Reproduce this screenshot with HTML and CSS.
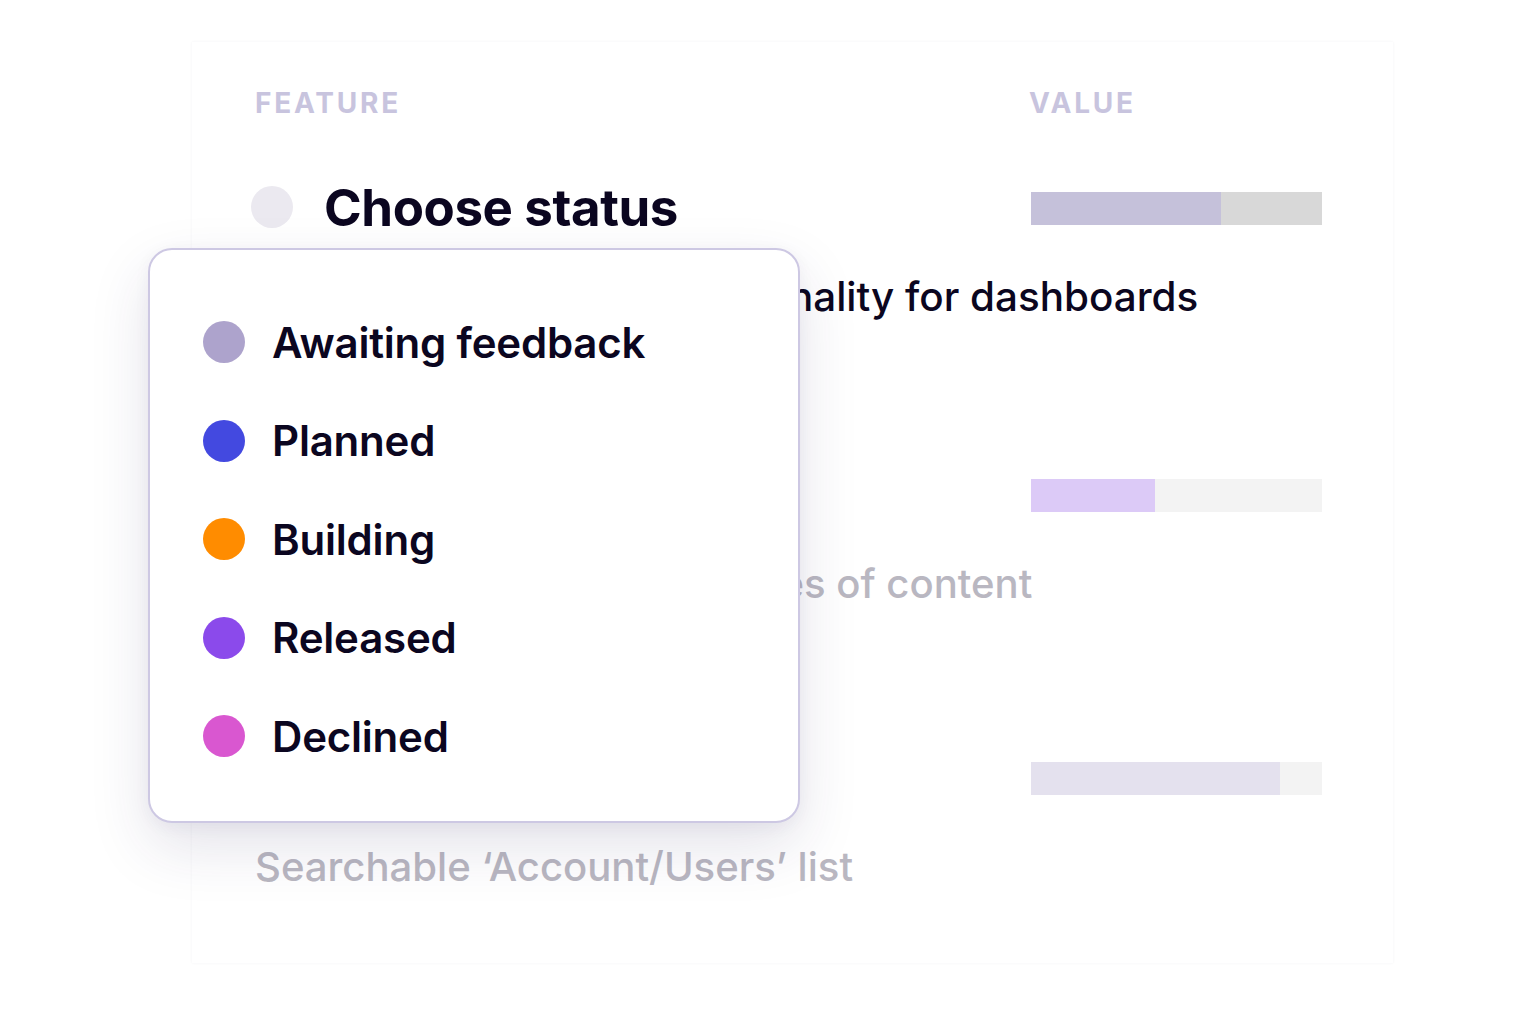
FILE: index.html
```html
<!DOCTYPE html>
<html lang="en">
<head>
<meta charset="utf-8">
<title>Feature status</title>
<link rel="stylesheet" href="styles.css">
</head>
<body>
<div class="stage">
  <section class="card">
    <div class="table-head">
      <span class="col-feature">FEATURE</span>
      <span class="col-value">VALUE</span>
    </div>

    <div class="row row-active">
      <div class="status-line">
        <div class="status">
          <span class="dot dot-empty"></span>
          <span class="status-label">Choose status</span>
        </div>
        <div class="bar bar-dark"><div class="fill fill-1" style="width:65.3%"></div></div>
      </div>
      <div class="feature-name">Improve data export functionality for dashboards</div>
    </div>

    <div class="row row-muted row-2">
      <div class="status-line">
        <div class="status">
          <span class="dot dot-empty"></span>
        </div>
        <div class="bar"><div class="fill fill-2" style="width:42.6%"></div></div>
      </div>
      <div class="feature-name">Insights across multiple types of content</div>
    </div>

    <div class="row row-muted row-3">
      <div class="status-line">
        <div class="status">
          <span class="dot dot-empty"></span>
        </div>
        <div class="bar"><div class="fill fill-3" style="width:85.6%"></div></div>
      </div>
      <div class="feature-name">Searchable ‘Account/Users’ list</div>
    </div>

    <div class="menu">
      <ul class="menu-list">
        <li class="menu-item"><span class="dot dot-awaiting"></span>Awaiting feedback</li>
        <li class="menu-item"><span class="dot dot-planned"></span>Planned</li>
        <li class="menu-item"><span class="dot dot-building"></span>Building</li>
        <li class="menu-item"><span class="dot dot-released"></span>Released</li>
        <li class="menu-item"><span class="dot dot-declined"></span>Declined</li>
      </ul>
    </div>
  </section>
</div>
</body>
</html>
```

FILE: styles.css
```css
* { box-sizing: border-box; }

html, body {
  margin: 0;
  padding: 0;
  background: #ffffff;
}

body {
  font-family: Inter, "Noto Sans", "Liberation Sans", sans-serif;
  color: #0b0620;
  width: 1540px;
  height: 1024px;
  overflow: hidden;
}

.stage {
  padding: 42px 147px 0 192px;
}

.card {
  position: relative;
  width: 1201px;
  height: 921px;
  background: #ffffff;
  box-shadow: 0 0 3px rgba(40, 30, 80, 0.05);
  padding: 44px 71px 0 63px;
}

.table-head {
  display: flex;
  justify-content: space-between;
  height: 34px;
  align-items: center;
  font-size: 28px;
  font-weight: 700;
  letter-spacing: 2.8px;
  color: #c8c4de;
}

.col-value {
  width: 293px;
}

.row {
  display: flex;
  flex-direction: column;
}

.row-active { margin-top: 57px; }
.row-2 { margin-top: 142px; }
.row-3 { margin-top: 138px; }

.status-line {
  display: flex;
  justify-content: space-between;
  align-items: center;
  height: 60px;
}

.status {
  display: flex;
  align-items: center;
  gap: 31px;
  margin-left: -4px;
}

.status-label {
  font-size: 51px;
  font-weight: 700;
  letter-spacing: -0.4px;
  color: #0b0620;
}

.dot {
  flex: none;
  display: inline-block;
  width: 42px;
  height: 42px;
  border-radius: 50%;
}

.dot-empty { background: #ebe9f0; }

.bar {
  width: 291px;
  height: 33px;
  background: #f3f3f3;
  margin-top: 3px;
  display: flex;
}

.bar-dark { background: #d8d8d8; }

.fill { height: 100%; }
.fill-1 { background: #c5c1da; }
.fill-2 { background: #dccaf7; }
.fill-3 { background: #e4e1ee; }

.feature-name {
  margin-top: 35px;
  height: 50px;
  line-height: 50px;
  font-size: 40.4px;
  font-weight: 500;
  color: #0b0620;
  white-space: nowrap;
}

.row-muted .feature-name {
  font-size: 40.1px;
  color: #b9b7c1;
}

.menu {
  position: absolute;
  left: -44px;
  top: 206px;
  width: 652px;
  height: 575px;
  background: #ffffff;
  border: 2px solid #cdc8e3;
  border-radius: 24px;
  box-shadow: 0 24px 60px rgba(50, 40, 90, 0.13), 0 4px 16px rgba(50, 40, 90, 0.05);
  padding: 62px 0 0 53px;
}

.menu-list {
  list-style: none;
  margin: 0;
  padding: 0;
  display: flex;
  flex-direction: column;
  gap: 38.5px;
}

.menu-item {
  display: flex;
  align-items: center;
  gap: 27px;
  height: 60px;
  font-size: 42px;
  font-weight: 600;
  letter-spacing: -0.2px;
  color: #0b0620;
}

.dot-awaiting { background: #ada3cc; }
.dot-planned { background: #4349e0; }
.dot-building { background: #ff8c00; }
.dot-released { background: #8b4aeb; }
.dot-declined { background: #d957d0; }
```
